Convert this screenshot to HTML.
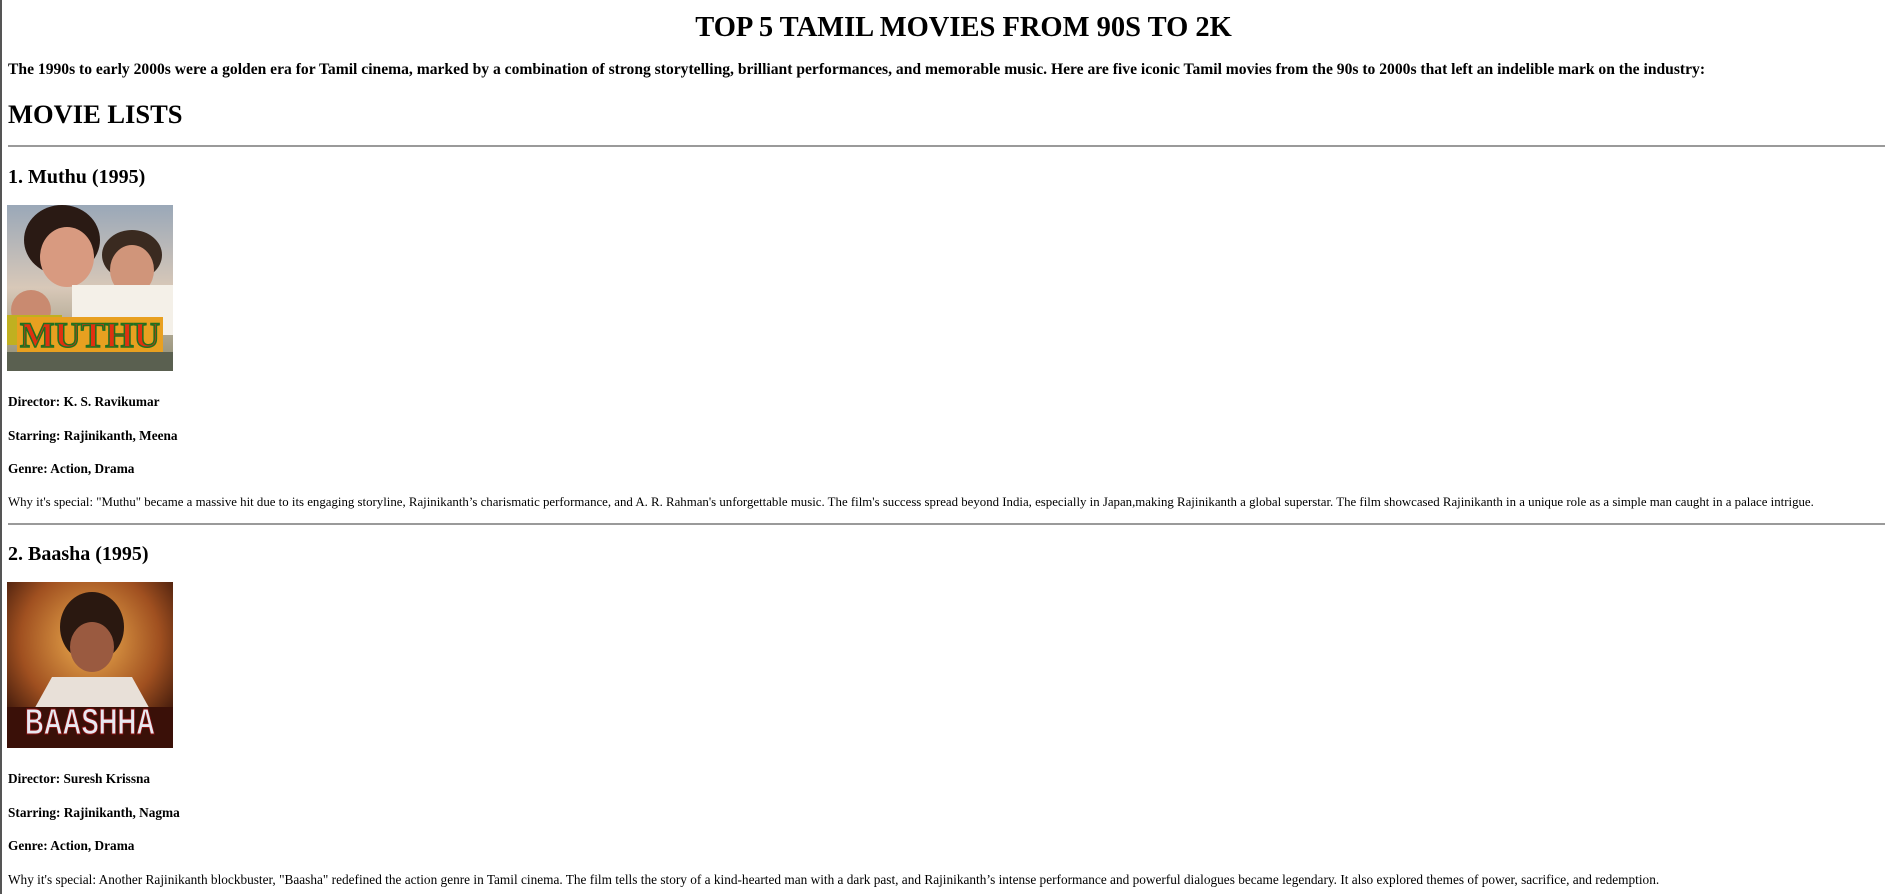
<!DOCTYPE html>
<html><head><meta charset="utf-8"><style>
html,body{margin:0;padding:0;background:#fff;width:1885px;height:894px;overflow:hidden}
body{font-family:"Liberation Serif",serif;color:#000;position:relative}
.a{position:absolute;white-space:nowrap;line-height:1}
.b{font-weight:bold}
hr{position:absolute;left:8px;width:1877px;margin:0;border:0;border-top:2px solid #9a9a9a;height:0}
.lb{position:absolute;left:0;top:0;width:2px;height:894px;background:#555}
</style></head><body>
<div class="lb"></div>
<div class="a b" style="left:21px;width:1885px;text-align:center;top:14px;font-size:28.5px">TOP 5 TAMIL MOVIES FROM 90S TO 2K</div>
<div class="a b" style="left:8px;top:62px;font-size:15.6px">The 1990s to early 2000s were a golden era for Tamil cinema, marked by a combination of strong storytelling, brilliant performances, and memorable music. Here are five iconic Tamil movies from the 90s to 2000s that left an indelible mark on the industry:</div>
<div class="a b" style="left:8px;top:101px;font-size:26.5px">MOVIE LISTS</div>
<hr style="top:145px">
<div class="a b" style="left:8px;top:167px;font-size:20px">1. Muthu (1995)</div>
<svg class="a" style="left:7px;top:205px" width="166" height="166" viewBox="0 0 166 166">
<defs><linearGradient id="m1" x1="0" y1="0" x2="0" y2="1"><stop offset="0" stop-color="#9aa8b8"/><stop offset=".5" stop-color="#d8c8b8"/><stop offset="1" stop-color="#8a8a70"/></linearGradient></defs>
<rect width="166" height="166" fill="url(#m1)"/>
<ellipse cx="55" cy="35" rx="38" ry="35" fill="#2a1a14"/>
<ellipse cx="60" cy="52" rx="27" ry="30" fill="#d89a80"/>
<ellipse cx="125" cy="50" rx="30" ry="25" fill="#3a2a20"/>
<ellipse cx="125" cy="65" rx="22" ry="25" fill="#d0957a"/>
<rect x="65" y="80" width="101" height="50" fill="#f4f0e8"/>
<ellipse cx="24" cy="105" rx="20" ry="20" fill="#c98a70"/>
<rect x="0" y="110" width="55" height="30" fill="#c0b020"/>
<rect x="10" y="112" width="146" height="35" fill="#e8a020"/>
<text x="83" y="142" text-anchor="middle" font-family="Liberation Serif" font-weight="bold" font-size="36" textLength="140" lengthAdjust="spacingAndGlyphs" fill="#e03010" stroke="#207020" stroke-width="1.5">MUTHU</text>
<rect x="0" y="147" width="166" height="19" fill="#5a6050"/>
</svg>
<div class="a b" style="left:8px;top:395px;font-size:13.3px">Director: K. S. Ravikumar</div>
<div class="a b" style="left:8px;top:429px;font-size:13.3px">Starring: Rajinikanth, Meena</div>
<div class="a b" style="left:8px;top:462px;font-size:13.3px">Genre: Action, Drama</div>
<div class="a" style="left:8px;top:496px;font-size:12.85px">Why it's special: "Muthu" became a massive hit due to its engaging storyline, Rajinikanth’s charismatic performance, and A. R. Rahman's unforgettable music. The film's success spread beyond India, especially in Japan,making Rajinikanth a global superstar. The film showcased Rajinikanth in a unique role as a simple man caught in a palace intrigue.</div>
<hr style="top:523px">
<div class="a b" style="left:8px;top:544px;font-size:20px">2. Baasha (1995)</div>
<svg class="a" style="left:7px;top:582px" width="166" height="166" viewBox="0 0 166 166">
<defs><radialGradient id="m2" cx=".5" cy=".35" r=".7"><stop offset="0" stop-color="#f0b050"/><stop offset=".6" stop-color="#a05020"/><stop offset="1" stop-color="#301008"/></radialGradient></defs>
<rect width="166" height="166" fill="url(#m2)"/>
<ellipse cx="85" cy="45" rx="32" ry="35" fill="#2a1810"/>
<ellipse cx="85" cy="65" rx="22" ry="25" fill="#9a5a40"/>
<path d="M45 95 L125 95 L150 140 L20 140Z" fill="#e8e0d8"/>
<rect x="0" y="125" width="166" height="41" fill="#3a1008"/>
<text x="83" y="152" text-anchor="middle" font-family="Liberation Sans" font-weight="bold" font-size="36" textLength="130" lengthAdjust="spacingAndGlyphs" fill="#e8e8f0" stroke="#8a1010" stroke-width="1">BAASHHA</text>
</svg>
<div class="a b" style="left:8px;top:772px;font-size:13.3px">Director: Suresh Krissna</div>
<div class="a b" style="left:8px;top:806px;font-size:13.3px">Starring: Rajinikanth, Nagma</div>
<div class="a b" style="left:8px;top:839px;font-size:13.3px">Genre: Action, Drama</div>
<div class="a" style="left:8px;top:873px;font-size:13.3px">Why it's special: Another Rajinikanth blockbuster, "Baasha" redefined the action genre in Tamil cinema. The film tells the story of a kind-hearted man with a dark past, and Rajinikanth’s intense performance and powerful dialogues became legendary. It also explored themes of power, sacrifice, and redemption.</div>
</body></html>
